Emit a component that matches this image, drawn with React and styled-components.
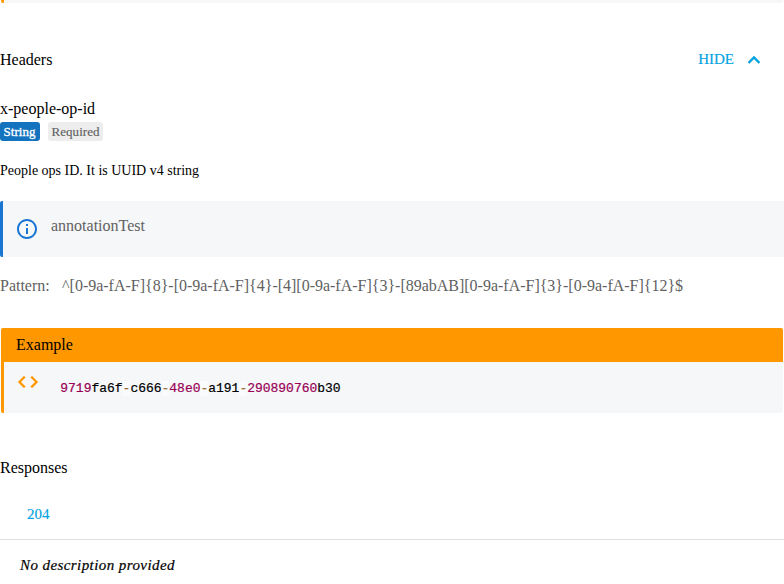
import React from 'react';
import styled, { createGlobalStyle } from 'styled-components';

const GlobalStyle = createGlobalStyle`
  * { box-sizing: border-box; }
  body { margin: 0; background: #fff; color: #000; font: 16px/24px "Liberation Serif", serif; overflow: hidden; }
`;
const Page = styled.main`
  height: 584px; overflow: hidden; display: flex; flex-direction: column;
`;
const PreviousPanel = styled.div`
  flex: none; height: 3px; margin: 0 1px; border-left: 3px solid #ff9800;
  background: #f5f7f9; border-radius: 0 0 2px 2px;
`;
const SectionHeader = styled.header`
  display: flex; justify-content: space-between; align-items: center;
  height: 24px; margin-top: 45px; padding-right: 18px;
`;
const Title = styled.h2`
  margin: 0; font-size: 16px; font-weight: 400; line-height: 24px;
`;
const Toggle = styled.button`
  display: flex; align-items: center; gap: 8px; height: 24px; padding: 0; border: 0;
  background: none; color: #00a2df; font: 15px/24px "Liberation Serif", serif;
`;
const ToggleLabel = styled.span`
  height: 24px; line-height: 22px; -webkit-text-stroke: 0.15px;
`;
const Icon = styled.svg`
  flex: none; display: block; width: 24px; height: 24px; fill: currentColor;
  stroke: currentColor; stroke-width: ${p => p.$weight || 0};
`;
const PropertyName = styled.div`
  margin-top: 25px; height: 24px;
`;
const Badges = styled.div`
  display: flex; gap: 8px; margin-top: 1px;
`;
const Badge = styled.span`
  height: 19px; width: ${p => p.$width}px; padding-left: 3.5px; border-radius: 3px; line-height: 19px;
  font-size: 13px; letter-spacing: 0.05px; white-space: nowrap;
  background: ${p => (p.$primary ? '#1473bf' : '#ededed')};
  color: ${p => (p.$primary ? '#fff' : '#616161')};
  -webkit-text-stroke: ${p => (p.$primary ? '0.3px #fff' : '0.15px')};
`;
const Description = styled.p`
  margin: 19px 0 0; font-size: 14px; line-height: 22px;
`;
const Note = styled.aside`
  display: flex; gap: 12px; height: 56px; margin-top: 19px; padding: 13px 12px;
  border-left: 3px solid #1976d2; border-radius: 2px; background: #f5f7f9; color: #616161;
  svg { color: #1976d2; margin-top: 3px; }
`;
const Pattern = styled.div`
  display: flex; gap: 12.4px; height: 24px; margin-top: 17px; color: #616161; white-space: nowrap;
  letter-spacing: -0.01px;
`;
const Example = styled.section`
  margin: 30px 1px 0; border-radius: 2px; overflow: hidden; background: #f5f7f9;
`;
const ExampleTitle = styled.div`
  height: 34px; padding-left: 15px; line-height: 34px; background: #ff9800;
`;
const ExampleBody = styled.div`
  display: flex; gap: 20.3px; height: 51px; padding: 8px 12px; border-left: 3px solid #ff9800;
  svg { color: #ff9800; }
`;
const Code = styled.code`
  margin-top: 9px; font: 13px/20px "Liberation Mono", monospace; white-space: pre;
  letter-spacing: -0.02px; -webkit-text-stroke: 0.2px;
`;
const NumberToken = styled.span`
  color: #990055;
`;
const Operator = styled.span`
  color: #9a6e3a; background: rgba(255, 255, 255, 0.5);
`;
const ResponsesTitle = styled(Title)`
  margin-top: 43px;
`;
const Tabs = styled.nav`
  display: flex; height: 60px; border-bottom: 1px solid #e0e0e0;
`;
const Tab = styled.button`
  height: 48px; margin-top: 10px; padding: 0 27px; border: 0; background: none;
  color: #00a2df; font: 15px/48px "Liberation Serif", serif; -webkit-text-stroke: 0.15px;
`;
const Empty = styled.p`
  margin: 13px 0 0 20px; line-height: 24px; font-size: 15px; font-style: italic;
  letter-spacing: 0.42px; -webkit-text-stroke: 0.2px;
`;

export default function App() {
  return (
    <Page>
      <GlobalStyle />
      <PreviousPanel />
      <SectionHeader>
        <Title>Headers</Title>
        <Toggle>
          <ToggleLabel>HIDE</ToggleLabel>
          <Icon $weight={0.5} viewBox="0 0 24 24"><path d="M7.41 15.41 12 10.83l4.59 4.58L18 14l-6-6-6 6z" /></Icon>
        </Toggle>
      </SectionHeader>
      <PropertyName>x-people-op-id</PropertyName>
      <Badges>
        <Badge $primary $width={40}>String</Badge>
        <Badge $width={55}>Required</Badge>
      </Badges>
      <Description>People ops ID. It is UUID v4 string</Description>
      <Note>
        <Icon viewBox="0 0 24 24"><path d="M11 7h2v2h-2zm0 4h2v6h-2zm1-9C6.48 2 2 6.48 2 12s4.48 10 10 10 10-4.48 10-10S17.52 2 12 2zm0 18c-4.41 0-8-3.59-8-8s3.59-8 8-8 8 3.59 8 8-3.59 8-8 8z" /></Icon>
        <span>annotationTest</span>
      </Note>
      <Pattern>
        <span>Pattern:</span>
        <span>{'^[0-9a-fA-F]{8}-[0-9a-fA-F]{4}-[4][0-9a-fA-F]{3}-[89abAB][0-9a-fA-F]{3}-[0-9a-fA-F]{12}$'}</span>
      </Pattern>
      <Example>
        <ExampleTitle>Example</ExampleTitle>
        <ExampleBody>
          <Icon $weight={0.3} viewBox="0 0 24 24"><path d="M9.4 16.6 4.8 12l4.6-4.6L8 6l-6 6 6 6zm5.2 0 4.6-4.6-4.6-4.6L16 6l6 6-6 6z" /></Icon>
          <Code>
            <NumberToken>9719</NumberToken>fa6f<Operator>-</Operator>c666<Operator>-</Operator><NumberToken>48e0</NumberToken><Operator>-</Operator>a191<Operator>-</Operator><NumberToken>290890760</NumberToken>b30
          </Code>
        </ExampleBody>
      </Example>
      <ResponsesTitle>Responses</ResponsesTitle>
      <Tabs><Tab>204</Tab></Tabs>
      <Empty>No description provided</Empty>
    </Page>
  );
}
